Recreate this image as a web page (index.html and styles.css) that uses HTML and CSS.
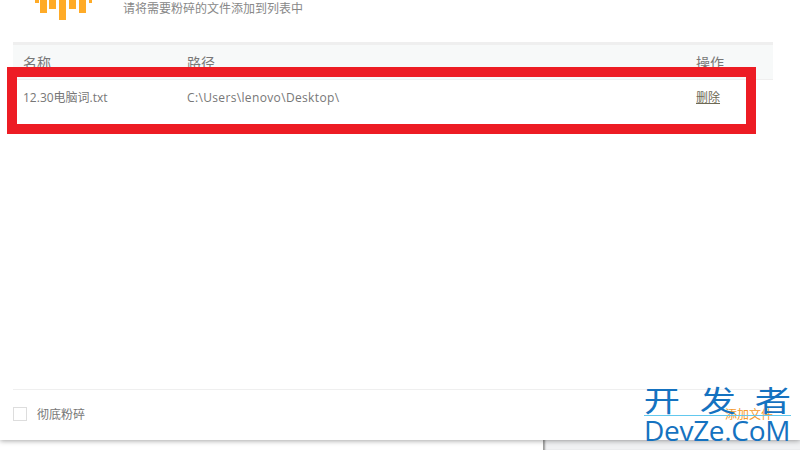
FILE: index.html
```html
<!DOCTYPE html>
<html lang="zh">
<head>
<meta charset="utf-8">
<title>文件粉碎</title>
<link rel="stylesheet" href="styles.css">
</head>
<body>
<main class="window">
  <header class="top">
    <svg class="logo" width="58" height="20" viewBox="0 0 58 20" aria-hidden="true">
      <g fill="#ffab27">
        <rect x="0" y="0" width="4" height="3"/>
        <rect x="5" y="0" width="7" height="13"/>
        <rect x="14" y="0" width="7" height="9"/>
        <rect x="24" y="0" width="7" height="20"/>
        <rect x="34" y="0" width="7" height="9"/>
        <rect x="44" y="0" width="7" height="13"/>
        <rect x="54" y="0" width="3" height="3"/>
      </g>
    </svg>
    <p class="hint">请将需要粉碎的文件添加到列表中</p>
  </header>
  <section class="list">
    <div class="row head">
      <span class="c-name">名称</span>
      <span class="c-path">路径</span>
      <span class="c-op">操作</span>
    </div>
    <div class="row item">
      <span class="c-name">12.30电脑词.txt</span>
      <span class="c-path">C:\Users\lenovo\Desktop\</span>
      <span class="c-op"><a class="del" href="#">删除</a></span>
    </div>
  </section>
  <footer class="bottom">
    <label class="check"><span class="box"></span>彻底粉碎</label>
    <span class="add">添加文件</span>
  </footer>
  <div class="mark" aria-hidden="true"></div>
  <div class="wm">
    <div class="wm-cn"><span>开</span><span>发</span><span>者</span></div>
    <div class="wm-en">DevZe.CoM</div>
  </div>
</main>
<div class="under">
  <div class="under-left"></div>
  <div class="under-right"></div>
</div>
</body>
</html>
```
FILE: styles.css
```css
* { box-sizing: border-box; }
html, body { margin: 0; padding: 0; }
body {
  width: 800px;
  height: 450px;
  overflow: hidden;
  background: #fff;
  font-family: "Open Sans", "Noto Sans CJK SC", sans-serif;
  font-size: 12px;
  color: #777;
  display: flex;
  flex-direction: column;
}
.window {
  position: relative;
  z-index: 1;
  height: 440px;
  flex: none;
  background: #fff;
  display: flex;
  flex-direction: column;
  box-shadow: 0 1px 5px rgba(0,0,0,.35);
}
.top {
  height: 42px;
  flex: none;
  display: flex;
  padding-left: 35px;
}
.logo { flex: none; display: block; }
.hint {
  margin: 0 0 0 30px;
  line-height: 18px;
  color: #888;
}
.list {
  flex: 1;
  margin: 0 27px 0 13px;
}
.row { display: flex; padding-left: 10px; }
.head {
  height: 38px;
  padding-top: 9px;
  background: #f7f9f9;
  border-top: 3px solid #efefef;
  border-bottom: 1px solid #efefef;
  font-size: 14px;
  line-height: 18px;
}
.item {
  height: 36px;
  align-items: center;
  margin-top: -1px;
}
.item .c-path { letter-spacing: .35px; }
.c-name { width: 164px; flex: none; }
.c-path { flex: 1; }
.c-op { width: 77px; flex: none; }
.del { color: #6e6a55; text-decoration: underline; font-size: 12px; }
.bottom {
  height: 51px;
  flex: none;
  margin-left: 13px;
  margin-right: 27px;
  padding-bottom: 2px;
  border-top: 1px solid #efefef;
  display: flex;
  align-items: center;
  justify-content: space-between;
}
.check { display: flex; align-items: center; gap: 10px; }
.box {
  width: 14px;
  height: 14px;
  border: 1px solid #ddd;
  background: #fff;
}
.add { color: #f39a2c; }
.mark {
  position: absolute;
  left: 7px;
  top: 67px;
  width: 749px;
  height: 67px;
  border: 10px solid #ed1c24;
}
.wm {
  position: absolute;
  left: 644px;
  top: 380px;
  width: 147px;
  color: #1572c0;
  pointer-events: none;
}
.wm-cn {
  display: flex;
  justify-content: space-between;
  height: 36px;
  padding-top: 2px;
  border-bottom: 1px solid #62c8ee;
  font-family: "Noto Sans CJK SC", sans-serif;
  font-size: 29px;
  line-height: 34px;
  font-weight: 400;
}
.wm-cn span {
  display: block;
  width: 36px;
  text-align: center;
  transform: scaleX(1.25);
}
.wm-en {
  font-size: 28px;
  line-height: 28px;
  letter-spacing: -.3px;
  white-space: nowrap;
}
.under { flex: 1; display: flex; }
.under-left { width: 543px; background: #fff; }
.under-right { flex: 1; background: #f0f1f3; box-shadow: inset 3px 0 2px -1px #999; }
```
